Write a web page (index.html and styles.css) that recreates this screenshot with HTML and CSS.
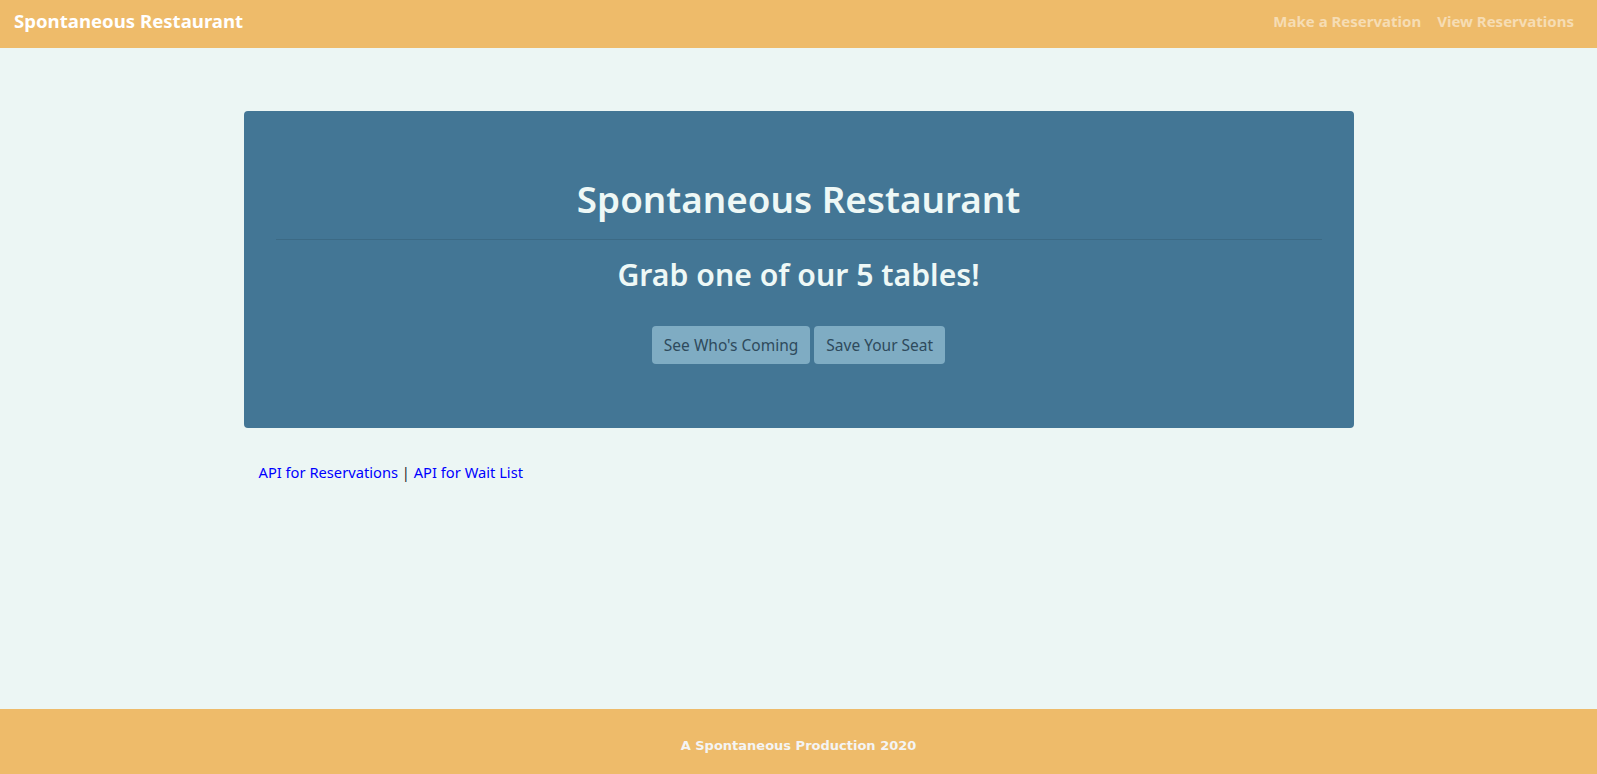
FILE: index.html
```html
<!DOCTYPE html>
<html lang="en">
<head>
<meta charset="utf-8">
<title>Spontaneous Restaurant</title>
<link rel="stylesheet" href="styles.css">
</head>
<body>
<div class="page">
  <nav class="navbar">
    <a class="brand" href="#">Spontaneous Restaurant</a>
    <div class="nav-links">
      <a class="nav-link" href="#">Make a Reservation</a>
      <a class="nav-link" href="#">View Reservations</a>
    </div>
  </nav>
  <main class="container">
    <section class="jumbotron">
      <h1 class="title">Spontaneous Restaurant</h1>
      <hr class="divider">
      <h2 class="subtitle">Grab one of our 5 tables!</h2>
      <div class="actions">
        <a class="btn" href="#">See Who's Coming</a>
        <a class="btn" href="#">Save Your Seat</a>
      </div>
    </section>
    <p class="api-links"><a href="#">API for Reservations</a> | <a href="#">API for Wait List</a></p>
  </main>
  <footer class="footer">A Spontaneous Production 2020</footer>
</div>
</body>
</html>
```
FILE: styles.css
```css
* { box-sizing: border-box; }
html, body { margin: 0; height: 100%; }
body {
  background: #ecf6f4;
  font-family: "Noto Sans", "Open Sans", sans-serif;
  font-size: 16px;
  color: #212529;
}
.page {
  min-height: 774px;
  display: flex;
  flex-direction: column;
}
.navbar {
  height: 48px;
  background: #eebb6a;
  display: flex;
  align-items: center;
  justify-content: space-between;
  padding: 0 14px 7px;
}
.brand {
  color: #ffffff;
  font-weight: 700;
  font-size: 18.6px;
  text-decoration: none;
}
.nav-links {
  display: flex;
  gap: 16px;
  padding-right: 9px;
}
.nav-link {
  color: rgba(255, 255, 255, 0.5);
  font-weight: 700;
  font-size: 15px;
  text-decoration: none;
}
.container {
  width: 1110px;
  margin: 63px auto 0;
  flex: 1;
}
.jumbotron {
  background: #437695;
  border-radius: 4px;
  padding: 64px 32px;
  text-align: center;
  color: #eef8f6;
  margin-bottom: 32px;
}
.title {
  margin: 0;
  font-size: 36.8px;
  font-weight: 600;
  line-height: 48px;
}
.divider {
  border: 0;
  border-top: 1px solid rgba(0, 0, 0, 0.1);
  margin: 16px 0;
}
.subtitle {
  margin: 0;
  font-size: 30.2px;
  font-weight: 600;
  line-height: 38px;
}
.actions {
  margin-top: 32px;
  display: flex;
  justify-content: center;
  gap: 4px;
}
.btn {
  display: inline-block;
  background: #7facc3;
  color: #2e4a5c;
  text-decoration: none;
  font-size: 15.5px;
  line-height: 24px;
  padding: 7px 12px;
  border-radius: 4px;
}
.api-links {
  margin: 0;
  padding: 0 15px;
  line-height: 24px;
  font-size: 14.7px;
  color: #212529;
}
.api-links a {
  color: #0000ff;
  text-decoration: none;
}
.footer {
  height: 65px;
  background: #eebb6a;
  color: #f4f4f4;
  display: flex;
  align-items: center;
  justify-content: center;
  padding-top: 7px;
  font-family: "DejaVu Sans", sans-serif;
  font-weight: 700;
  font-size: 13px;
}
```
